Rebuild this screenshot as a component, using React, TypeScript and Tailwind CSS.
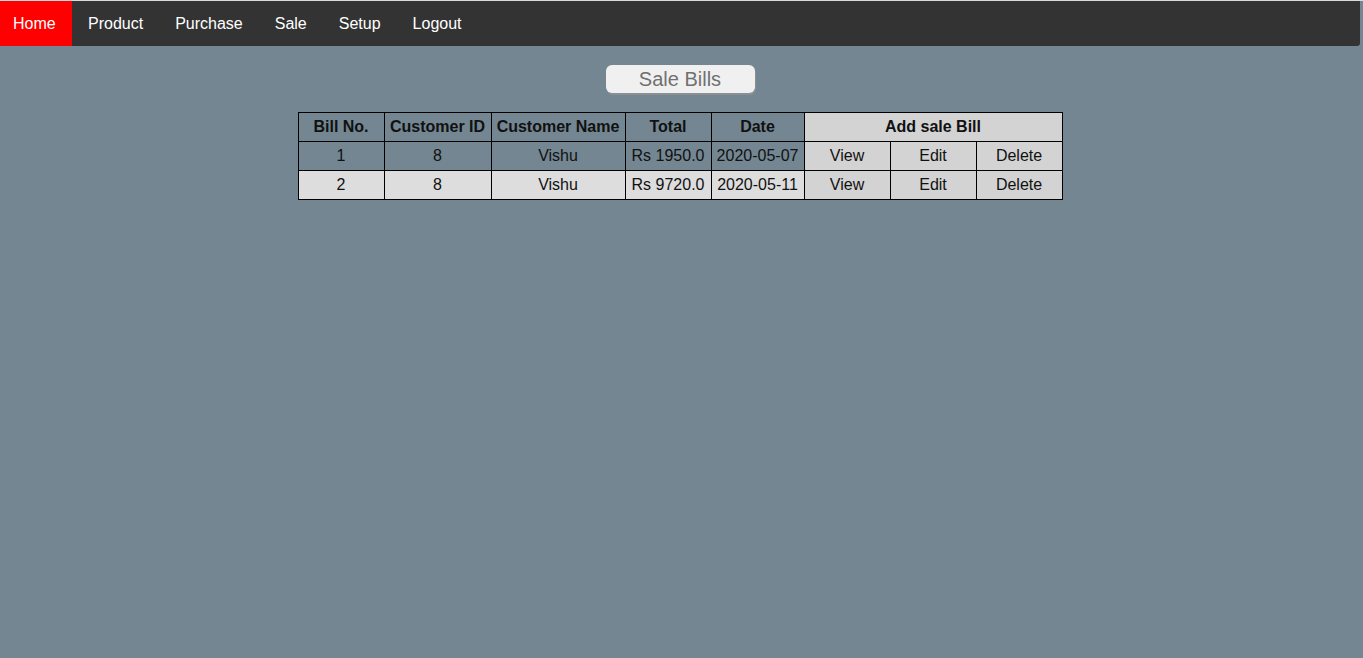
const navItems = ["Home", "Product", "Purchase", "Sale", "Setup", "Logout"];

const bills = [
  { no: 1, customerId: 8, name: "Vishu", total: "Rs 1950.0", date: "2020-05-07" },
  { no: 2, customerId: 8, name: "Vishu", total: "Rs 9720.0", date: "2020-05-11" },
];

const cell = "border border-black text-center h-[29px] p-0";
const th = `${cell} font-bold`;
const td = `${cell} font-normal`;

export default function App() {
  return (
    <div className="min-h-[658px] bg-[#738691] font-['Liberation_Sans',Arial,sans-serif] border-t border-[#d8dadc]">
      {/* Menu bar */}
      <nav className="w-[1360px] h-[45px] bg-[#333333] flex rounded-br-[3px] text-[16px] text-white">
        {navItems.map((item, i) => (
          <a
            key={item}
            href="#"
            className={
              i === 0
                ? "bg-[#ff0000] w-[72px] pl-[13px] flex items-center"
                : "px-4 flex items-center"
            }
          >
            {item}
          </a>
        ))}
      </nav>

      <div className="w-[1360px] flex flex-col items-center">
        <button className="mt-[19px] w-[149px] h-[28px] bg-[#f0f0f0] rounded-[6px] shadow-[1px_2px_0_#8a8f93] text-[20px] leading-[28px] text-[#707070]">
          Sale Bills
        </button>

        <table className="mt-[19px] border-collapse text-[16px] text-[#111]">
          <thead>
            <tr>
              <th className={`${th} w-[86px]`}>Bill No.</th>
              <th className={`${th} w-[107px]`}>Customer ID</th>
              <th className={`${th} w-[134px]`}>Customer Name</th>
              <th className={`${th} w-[86px]`}>Total</th>
              <th className={`${th} w-[93px]`}>Date</th>
              <th colSpan={3} className={`${th} bg-[#d3d3d3]`}>
                Add sale Bill
              </th>
            </tr>
          </thead>
          <tbody>
            {bills.map((b, i) => {
              const bg = i % 2 === 1 ? "bg-[#dddddd]" : "";
              return (
                <tr key={b.no}>
                  <td className={`${td} ${bg}`}>{b.no}</td>
                  <td className={`${td} ${bg}`}>{b.customerId}</td>
                  <td className={`${td} ${bg}`}>{b.name}</td>
                  <td className={`${td} ${bg}`}>{b.total}</td>
                  <td className={`${td} ${bg}`}>{b.date}</td>
                  <td className={`${td} w-[86px] bg-[#d3d3d3]`}>View</td>
                  <td className={`${td} w-[86px] bg-[#d3d3d3]`}>Edit</td>
                  <td className={`${td} w-[86px] bg-[#d3d3d3]`}>Delete</td>
                </tr>
              );
            })}
          </tbody>
        </table>
      </div>
    </div>
  );
}
